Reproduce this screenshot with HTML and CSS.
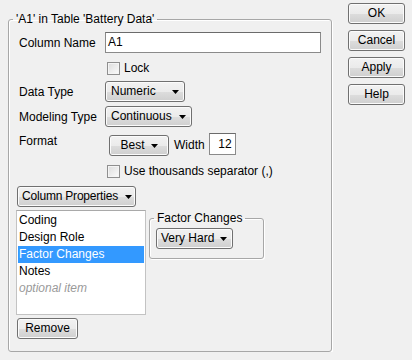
FILE: index.html
```html
<!DOCTYPE html>
<html lang="en">
<head>
    <meta charset="UTF-8">
    <title>Column Info</title>
    <link rel="stylesheet" href="styles.css">
</head>
<body>
    <div class="dialog">
        <fieldset class="group main">
            <legend>'A1' in Table 'Battery Data'</legend>

            <div class="row name-row">
                <span class="label">Column Name</span>
                <div class="textbox name-box">A1</div>
            </div>

            <div class="row check-row lock-row">
                <span class="checkbox"></span>
                <span>Lock</span>
            </div>

            <div class="row type-row">
                <span class="label">Data Type</span>
                <div class="button drop w-numeric">Numeric <svg width="7" height="4"><polygon points="0,0 7,0 3.5,4" fill="#000"/></svg></div>
            </div>

            <div class="row model-row">
                <span class="label">Modeling Type</span>
                <div class="button drop w-continuous">Continuous <svg width="7" height="4"><polygon points="0,0 7,0 3.5,4" fill="#000"/></svg></div>
            </div>

            <div class="row format-row">
                <span class="label format-label">Format</span>
                <div class="button drop w-best">Best <svg width="7" height="4"><polygon points="0,0 7,0 3.5,4" fill="#000"/></svg></div>
                <span class="width-label">Width</span>
                <div class="textbox width-box">12</div>
            </div>

            <div class="row check-row sep-row">
                <span class="checkbox"></span>
                <span>Use thousands separator (,)</span>
            </div>

            <div class="button drop w-props"><span class="tight">Column Properties</span> <svg width="7" height="4"><polygon points="0,0 7,0 3.5,4" fill="#000"/></svg></div>

            <div class="props">
                <ul class="listbox">
                    <li>Coding</li>
                    <li>Design Role</li>
                    <li class="selected">Factor Changes</li>
                    <li>Notes</li>
                    <li class="optional">optional item</li>
                </ul>
                <fieldset class="group factor">
                    <legend>Factor Changes</legend>
                    <div class="button drop w-hard">Very Hard <svg width="7" height="4"><polygon points="0,0 7,0 3.5,4" fill="#000"/></svg></div>
                </fieldset>
            </div>

            <div class="button w-remove">Remove</div>
        </fieldset>

        <div class="actions">
            <div class="button action">OK</div>
            <div class="button action">Cancel</div>
            <div class="button action">Apply</div>
            <div class="button action">Help</div>
        </div>
    </div>
</body>
</html>
```

FILE: styles.css
```css
* {
    box-sizing: border-box;
}
body {
    margin: 0;
    background: #f0f0f0;
    font-family: "Liberation Sans", Arial, sans-serif;
    font-size: 12px;
    color: #000;
}
.dialog {
    display: flex;
    align-items: flex-start;
}

/* group boxes */
.group {
    margin: 0;
    border: 1px solid #a7a7a7;
    border-radius: 3px;
    box-shadow: 1px 1px 0 #fff, inset 1px 1px 0 #fff;
    min-inline-size: 0;
}
.group legend {
    line-height: 14px;
    padding: 0 3px;
}
.main {
    margin: 12px 0 0 8px;
    width: 324px;
    padding: 6px 8px 12px 8px;
}
.main > legend {
    margin-left: -4px;
}
.factor {
    padding: 3px 6px 9px 6px;
    width: 115px;
    margin-top: 1px;
}
.factor legend {
    margin-left: -2px;
}

/* rows */
.row {
    display: flex;
    align-items: center;
}
.label {
    width: 88px;
    padding-left: 2px;
}
.lock-row {
    margin-top: 8px;
}
.type-row {
    margin-top: 6px;
}
.model-row {
    margin-top: 4px;
}
.format-row {
    margin-top: 6px;
    align-items: flex-start;
}
.format-label {
    padding-top: 1px;
    width: 92px;
}
.format-row .button {
    margin-top: 2px;
}
.width-label {
    margin: 5px 4px 0 5px;
}
.sep-row {
    margin-top: 8px;
}
.check-row {
    padding-left: 90px;
    gap: 4px;
}

/* inputs */
.textbox {
    background: #fff;
    border: 1px solid #8a8a8a;
    border-top-color: #6b6b6b;
    height: 21px;
    line-height: 19px;
}
.name-box {
    width: 216px;
    padding-left: 2px;
}
.width-box {
    width: 27px;
    height: 22px;
    line-height: 20px;
    text-align: right;
    padding-right: 3px;
}
.checkbox {
    width: 13px;
    height: 13px;
    border: 1px solid #8f8f8f;
    background: linear-gradient(135deg, #dcdcdc, #fbfbfb);
    box-shadow: inset 0 0 0 1px #f4f4f4;
}

/* buttons */
.button {
    height: 21px;
    line-height: 19px;
    border: 1px solid #707070;
    border-radius: 3px;
    background: linear-gradient(#f2f2f2 0%, #ebebeb 50%, #dddddd 51%, #cfcfcf 100%);
    box-shadow: inset 0 0 0 1px #fbfbfb;
    white-space: nowrap;
}
.drop {
    display: flex;
    align-items: center;
    justify-content: space-between;
    padding: 0 5px 0 5px;
}
.w-numeric {
    width: 80px;
}
.w-continuous {
    width: 87px;
}
.w-best {
    width: 60px;
    justify-content: center;
    gap: 6px;
}
.w-props {
    width: 119px;
    margin-top: 8px;
    padding: 0 3px 0 4px;
}
.tight {
    letter-spacing: -0.2px;
}
.w-hard {
    width: 77px;
    padding-left: 4px;
}
.w-remove {
    width: 61px;
    text-align: center;
    margin-top: 3px;
}

/* property list */
.props {
    display: flex;
    align-items: flex-start;
    gap: 3px;
    margin: 3px 0 0 -1px;
}
.listbox {
    list-style: none;
    margin: 0;
    padding: 1px;
    width: 130px;
    height: 105px;
    background: #fff;
    border: 1px solid #c3c3c3;
    border-top-color: #a9a9a9;
}
.listbox li {
    height: 17px;
    line-height: 17px;
    padding-left: 1px;
}
.listbox .selected {
    background: #3399ff;
    color: #fff;
}
.listbox .optional {
    font-style: italic;
    color: #9a9a9a;
}

/* right column */
.actions {
    display: flex;
    flex-direction: column;
    gap: 6px;
    margin: 3px 0 0 16px;
}
.action {
    width: 57px;
    text-align: center;
}
```
